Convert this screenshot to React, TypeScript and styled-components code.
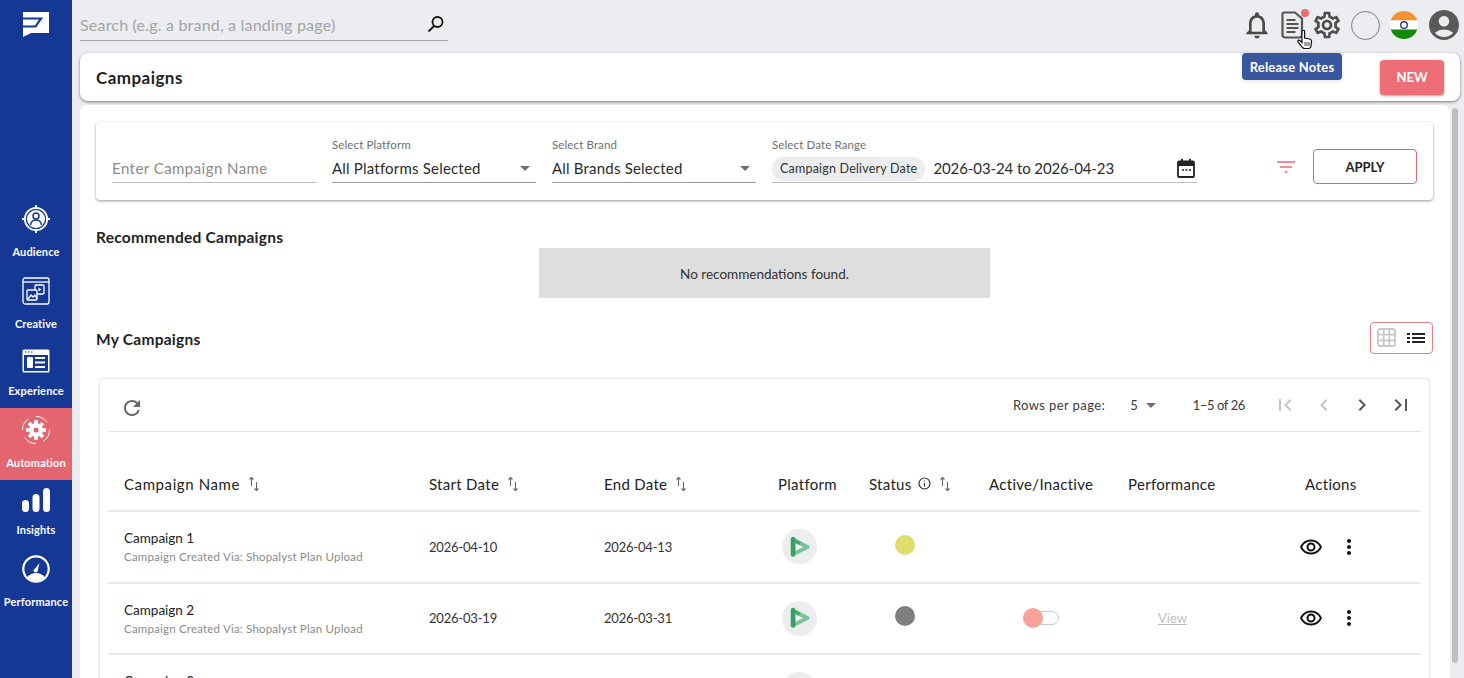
import React from 'react';
import styled, { createGlobalStyle } from 'styled-components';
import {
  MdOutlineNotifications, MdOutlineSettings, MdAccountCircle, MdRefresh,
  MdOutlineRemoveRedEye, MdMoreVert, MdFirstPage, MdLastPage, MdChevronLeft, MdChevronRight,
} from 'react-icons/md';

const Global = createGlobalStyle`
  html, body { margin: 0; padding: 0; height: 100%; overflow: hidden; }
  body { font-family: Lato, "Open Sans", sans-serif; background: #ebedf0; color: #1f1f1f; }
  #root { height: 100%; }
  * { box-sizing: border-box; }
`;

const Shell = styled.div`
  display: flex;
  height: 678px;
  overflow: hidden;
`;

const Sidebar = styled.aside`
  width: 72px;
  flex: none;
  background: #143893;
  padding-top: 12px;
  display: flex;
  flex-direction: column;
  align-items: center;
  position: relative;
  z-index: 2;
`;

const Nav = styled.nav`
  margin-top: 160px;
  width: 100%;
  display: flex;
  flex-direction: column;
`;

const NavItem = styled.div<{ $active?: boolean; $compact?: boolean }>`
  display: flex;
  flex-direction: column;
  align-items: center;
  gap: 6px;
  padding: ${p => (p.$compact ? '3px 0 10px' : '2px 0 10px')};
  background: ${p => (p.$active ? '#e2656f' : 'transparent')};
`;

const NavIcon = styled.div<{ $compact?: boolean }>`
  height: ${p => (p.$compact ? 34 : 40)}px;
  display: flex;
  align-items: center;
  justify-content: center;
`;

const NavLabel = styled.span`
  font-size: 11px;
  line-height: 14px;
  font-weight: 700;
  letter-spacing: 0.15px;
  color: #fff;
  white-space: nowrap;
`;

const Main = styled.main`
  flex: 1;
  min-width: 0;
  display: flex;
`;

const Content = styled.div`
  flex: 1;
  min-width: 0;
  padding-left: 8px;
  display: flex;
  flex-direction: column;
`;

const ScrollTrack = styled.div`
  width: 14px;
  flex: none;
  padding: 108px 6px 15px 2px;
  display: flex;
`;

const ScrollThumb = styled.div`
  width: 6px;
  height: 100%;
  border-radius: 3px;
  background: #bcbfc0;
`;

const TopBar = styled.header`
  height: 53px;
  flex: none;
  margin-right: -14px;
  display: flex;
  align-items: flex-start;
  justify-content: space-between;
  position: relative;
`;

const Search = styled.div`
  width: 368px;
  height: 41px;
  padding-top: 15px;
  border-bottom: 1px solid #a4a6a8;
  display: flex;
  justify-content: space-between;
  align-items: flex-start;
`;

const SearchText = styled.span`
  font-size: 16px;
  line-height: 20px;
  letter-spacing: 0.2px;
  color: #a3a5a8;
`;

const SearchIconWrap = styled.span`
  margin-right: 3px;
  line-height: 0;
`;

const TopIcons = styled.div`
  height: 53px;
  display: flex;
  align-items: center;
  padding-bottom: 3px;
  position: relative;
`;

const TopIcon = styled.span<{ $w: number }>`
  width: ${p => p.$w}px;
  display: flex;
  justify-content: center;
  position: relative;
  line-height: 0;
`;

const RedDot = styled.span`
  position: absolute;
  top: -2px;
  right: -1px;
  width: 8px;
  height: 8px;
  border-radius: 50%;
  background: #ec6a75;
`;

const EmptyCircle = styled.span`
  width: 29px;
  height: 29px;
  border-radius: 50%;
  border: 1px solid #7c7c7c;
  display: block;
`;

const Tooltip = styled.div`
  position: absolute;
  top: 53px;
  left: 4px;
  width: 100px;
  height: 27px;
  background: #39579e;
  color: #fff;
  font-size: 13px;
  font-weight: 700;
  letter-spacing: 0.2px;
  line-height: 28px;
  text-align: center;
  border-radius: 4px;
  z-index: 3;
  box-shadow: 0 2px 4px rgba(0,0,0,0.1);
`;

const Pointer = styled.svg`
  position: absolute;
  top: 30px;
  left: 59px;
  z-index: 4;
`;

const HeaderCard = styled.section`
  height: 48px;
  flex: none;
  background: #fff;
  border-radius: 8px;
  box-shadow: 0 1px 3px rgba(0,0,0,0.5);
  padding: 0 16px 0 16px;
  margin-right: -10px;
  display: flex;
  align-items: center;
  justify-content: space-between;
`;

const PageTitle = styled.h1`
  margin: 0;
  font-size: 17px;
  font-weight: 700;
  letter-spacing: 0.45px;
  color: #1f1f1f;
`;

const NewButton = styled.button`
  width: 64px;
  height: 35px;
  border: 0;
  border-radius: 4px;
  background: #ee6e78;
  color: #fff;
  font: 700 13px Lato, sans-serif;
  box-shadow: 0 1px 3px rgba(0,0,0,0.35);
`;

const BodyCard = styled.section`
  margin-top: 4px;
  flex: 1;
  min-height: 0;
  background: #fff;
  border-radius: 8px 8px 0 0;
  padding: 17px 17px 0 16px;
  overflow: hidden;
`;

const FilterCard = styled.div`
  height: 78px;
  border-radius: 4px;
  box-shadow: 0 1px 3px rgba(0,0,0,0.4);
  display: flex;
  align-items: flex-end;
  padding: 0 16px 17px 16px;
`;

const Field = styled.div<{ $w: number }>`
  width: ${p => p.$w}px;
  flex: none;
  margin-right: 16px;
  display: flex;
  flex-direction: column;
`;

const FieldLabel = styled.label`
  font-size: 11.5px;
  line-height: 14px;
  letter-spacing: 0.12px;
  color: #6f6f6f;
  margin-bottom: 4px;
`;

const FieldRow = styled.div<{ $light?: boolean }>`
  height: 27px;
  border-bottom: 1px solid ${p => (p.$light ? '#bdbdbd' : '#9a9a9a')};
  display: flex;
  align-items: center;
  justify-content: space-between;
  font-size: 15px;
  letter-spacing: 0.2px;
  color: #2b2b2b;
  padding-bottom: 2px;
`;

const Placeholder = styled.span`
  color: #8a8a8a;
  letter-spacing: 0.45px;
`;

const Caret = styled.span`
  width: 0;
  height: 0;
  border-left: 5px solid transparent;
  border-right: 5px solid transparent;
  border-top: 5px solid #707070;
  margin-right: 6px;
`;

const DateChip = styled.span`
  height: 24px;
  margin: 2px 8px 0 0;
  padding: 0 8px;
  border-radius: 12px;
  background: #ebedee;
  color: #333;
  font-size: 12.5px;
  letter-spacing: 0.2px;
  line-height: 24px;
  white-space: nowrap;
`;

const DateText = styled.span`
  flex: 1;
  white-space: nowrap;
  letter-spacing: -0.1px;
`;

const CalendarIcon = styled.svg`
  margin-right: 1px;
`;

const FilterTools = styled.div`
  margin-left: auto;
  display: flex;
  align-items: center;
  gap: 18px;
  margin-bottom: -1px;
`;

const ApplyButton = styled.button`
  width: 104px;
  height: 35px;
  background: #fff;
  border: 1px solid #cf6a72;
  border-radius: 4px;
  color: #222;
  font: 700 13px Lato, sans-serif;
`;

const SectionTitle = styled.h2`
  margin: 0;
  font-size: 15.5px;
  line-height: 20px;
  font-weight: 700;
  letter-spacing: 0.25px;
  color: #222;
`;

const Recommended = styled.div`
  margin-top: 27px;
`;

const EmptyBox = styled.div`
  width: 451px;
  height: 50px;
  margin: 1px auto 0;
  padding-top: 1px;
  background: #dedede;
  font-size: 13.5px;
  color: #333;
  display: flex;
  align-items: center;
  justify-content: center;
`;

const MyHeader = styled.div`
  margin-top: 23px;
  height: 33px;
  display: flex;
  align-items: center;
  justify-content: space-between;
`;

const MyTitle = styled(SectionTitle)`
  padding-top: 2px;
`;

const ViewToggle = styled.div`
  width: 63px;
  height: 32px;
  border: 1px solid #e77f87;
  border-radius: 4px;
  display: flex;
  align-items: center;
  justify-content: space-between;
  padding: 0 7px 0 6px;
`;

const TableCard = styled.div`
  margin: 25px 4px 0;
  border-radius: 4px 4px 0 0;
  box-shadow: 0 0 3px rgba(0,0,0,0.25);
  padding: 0 8px;
  height: 320px;
`;

const TableBar = styled.div`
  height: 53px;
  border-bottom: 1px solid #e2e2e2;
  display: flex;
  align-items: center;
  padding: 0 16px;
  font-size: 13px;
  color: #3a3a3a;
`;

const Refresh = styled.span`
  margin: 6px auto 0 -4px;
  line-height: 0;
`;

const RowsLabel = styled.span`
  margin-right: 25px;
  letter-spacing: 0.4px;
`;

const RowsValue = styled.span`
  display: flex;
  align-items: center;
  gap: 8px;
  margin-right: 31px;
`;

const RangeText = styled.span`
  margin-right: 28px;
  letter-spacing: -0.4px;
`;

const Pager = styled.span`
  display: flex;
  gap: 14.5px;
  line-height: 0;
  margin-right: -7.5px;
`;

const Grid = styled.div`
  display: grid;
  grid-template-columns: 305px 175px 174px 91px 120px 139px 177px 1fr;
  padding: 0 0 0 16px;
`;

const HeadRow = styled(Grid)`
  height: 80px;
  border-bottom: 2px solid #e9e9e9;
  align-items: center;
  font-size: 15px;
  letter-spacing: 0.3px;
  color: #222;
  padding-top: 25px;
`;

const HeadCell = styled.div<{ $wide?: boolean }>`
  display: flex;
  align-items: center;
  gap: 6px;
  white-space: nowrap;
  letter-spacing: ${p => (p.$wide ? '0.6px' : 'inherit')};
`;

const SortGlyph = styled.svg`
  margin-left: 2px;
  flex: none;
`;

const BodyRow = styled(Grid)`
  height: 71.5px;
  border-bottom: 2px solid #e9e9e9;
  align-items: center;
  font-size: 13px;
  color: #333;
`;

const NameCell = styled.div`
  display: flex;
  flex-direction: column;
  gap: 4px;
`;

const CampaignName = styled.span`
  font-size: 13.5px;
  color: #222;
`;

const CampaignSub = styled.span`
  font-size: 11.5px;
  letter-spacing: 0.2px;
  color: #8b8b8b;
`;

const DateCell = styled.div`
  letter-spacing: -0.2px;
`;

const PlatformBadge = styled.span`
  width: 35px;
  height: 35px;
  margin-left: 4px;
  border-radius: 50%;
  background: #ebedee;
  display: flex;
  align-items: center;
  justify-content: center;
`;

const StatusDot = styled.span<{ $color: string }>`
  display: block;
  width: 20px;
  height: 20px;
  margin: -4px 0 0 26px;
  border-radius: 50%;
  background: ${p => p.$color};
`;

const Toggle = styled.span`
  width: 36px;
  height: 14px;
  margin-left: 34px;
  border: 1px solid #c9c9c9;
  border-radius: 7px;
  position: relative;
  display: block;
`;

const ToggleKnob = styled.span`
  position: absolute;
  left: -1px;
  top: -4px;
  width: 20px;
  height: 20px;
  border-radius: 50%;
  background: #f8a29b;
`;

const ViewLink = styled.a`
  margin-left: 30px;
  color: #bdbdbd;
  text-decoration: underline;
  font-size: 13px;
`;

const Actions = styled.div`
  display: flex;
  align-items: center;
  gap: 14px;
  margin-left: -6.5px;
  color: #111;
  line-height: 0;
`;

const SortIcon = () => (
  <SortGlyph width="12" height="16" viewBox="0 0 12 16" fill="none" stroke="#666" strokeWidth="1.1">
    <path d="M3.5 10V1.500M1.500 3.500l2-2 2 2" />
    <path d="M8.500 6v8.500M6.500 12.500l2 2 2-2" />
  </SortGlyph>
);

const PlayLogo = () => (
  <svg width="22" height="22" viewBox="0 0 22 22">
    <path d="M4.500 4 L18.500 11 L4.500 18 Z" fill="#f2f5f2" stroke="#7cc294" strokeWidth="4" strokeLinejoin="round" />
    <path d="M4 3.500 L11 7.500" stroke="#4aaa6d" strokeWidth="3.500" />
    <path d="M4 3 V18.500" stroke="#38a060" strokeWidth="4.500" strokeLinecap="round" />
  </svg>
);

const rows = [
  { name: 'Campaign 1', start: '2026-04-10', end: '2026-04-13', color: '#dfdd6b', active: false },
  { name: 'Campaign 2', start: '2026-03-19', end: '2026-03-31', color: '#7f7f7f', active: true },
  { name: 'Campaign 3', start: '', end: '', color: '#7f7f7f', active: false },
];

export default function App() {
  return (
    <Shell>
      <Global />
      <Sidebar>
        <svg width="26" height="25" viewBox="0 0 26 25">
          <path d="M0 0h26v21H8l-8 4Z" fill="#fff" />
          <path d="M-1 6.500H18L12.500 14.500H-1" fill="none" stroke="#143893" strokeWidth="2.200" />
        </svg>
        <Nav>
          <NavItem>
            <NavIcon>
              <svg width="28" height="28" viewBox="0 0 28 28">
                <circle cx="14" cy="14" r="11.200" fill="none" stroke="#fff" strokeWidth="1.800" />
                <path d="M14 0v4M14 24v4M0 14h4M24 14h4" stroke="#fff" strokeWidth="1.800" />
                <circle cx="14" cy="14" r="9" fill="#fff" />
                <circle cx="14" cy="11" r="3" fill="none" stroke="#143893" strokeWidth="1.500" />
                <path d="M8.500 20c.5-3.500 2.500-5 5.500-5s5 1.500 5.500 5" fill="none" stroke="#143893" strokeWidth="1.500" />
              </svg>
            </NavIcon>
            <NavLabel>Audience</NavLabel>
          </NavItem>
          <NavItem>
            <NavIcon>
              <svg width="28" height="28" viewBox="0 0 28 28" fill="none" stroke="#fff" strokeWidth="1.300">
                <rect x="1" y="1" width="26" height="26" rx="2" />
                <path d="M1 5h26" />
                <rect x="13" y="8" width="9" height="9" rx="1" />
                <path d="M16.500 10.500v4l3-2Z" fill="#fff" stroke="none" />
                <rect x="5" y="13" width="10" height="10" rx="1" fill="#143893" />
                <path d="M6 22l3-4 2 2 2-2 2 4" />
              </svg>
            </NavIcon>
            <NavLabel>Creative</NavLabel>
          </NavItem>
          <NavItem $compact>
            <NavIcon $compact>
              <svg width="28" height="24" viewBox="0 0 28 24">
                <rect x="0.500" y="0.500" width="27" height="23" rx="1.500" fill="#fff" />
                <rect x="2" y="6" width="24" height="16" fill="#143893" />
                <rect x="5" y="8" width="6" height="11" rx="1" fill="#fff" />
                <path d="M13 9h10M13 13.500h10M13 18h10" stroke="#fff" strokeWidth="1.800" />
                <path d="M3 3h1.500M6 3h1.500M9 3h1.500" stroke="#143893" strokeWidth="1.200" />
              </svg>
            </NavIcon>
            <NavLabel>Experience</NavLabel>
          </NavItem>
          <NavItem $active>
            <NavIcon>
              <svg width="30" height="30" viewBox="0 0 30 30">
                <circle cx="15" cy="15" r="13.500" fill="none" stroke="#fff" strokeWidth="1" strokeDasharray="13 8" />
                <g stroke="#fff" strokeWidth="3.500">
                  <path d="M15 5v20M5 15h20M8 8l14 14M22 8 8 22" />
                </g>
                <circle cx="15" cy="15" r="7" fill="#fff" />
                <circle cx="15" cy="15" r="2.500" fill="#e2656f" />
              </svg>
            </NavIcon>
            <NavLabel>Automation</NavLabel>
          </NavItem>
          <NavItem $compact>
            <NavIcon $compact>
              <svg width="28" height="24" viewBox="0 0 28 24" fill="#fff">
                <rect x="0" y="12" width="7" height="12" rx="3.500" />
                <rect x="10.500" y="6" width="7" height="18" rx="3.500" />
                <rect x="21" y="0" width="7" height="24" rx="3.500" />
              </svg>
            </NavIcon>
            <NavLabel>Insights</NavLabel>
          </NavItem>
          <NavItem>
            <NavIcon>
              <svg width="28" height="28" viewBox="0 0 28 28">
                <circle cx="14" cy="14" r="12.700" fill="none" stroke="#fff" strokeWidth="2.200" />
                <path d="M5 22.500c2-3 5.500-4.500 9-4.500s7 1.500 9 4.500c-2.500 2.300-5.500 3.500-9 3.500s-6.500-1.200-9-3.500Z" fill="#fff" />
                <path d="M12 15l5.500-7 -2 8.500Z" fill="#fff" />
                <circle cx="13.500" cy="15.500" r="2" fill="#fff" />
              </svg>
            </NavIcon>
            <NavLabel>Performance</NavLabel>
          </NavItem>
        </Nav>
      </Sidebar>
      <Main>
        <Content>
          <TopBar>
            <Search>
              <SearchText>Search (e.g. a brand, a landing page)</SearchText>
              <SearchIconWrap>
                <svg width="18" height="18" viewBox="0 0 18 18" fill="none" stroke="#111" strokeWidth="1.800">
                  <circle cx="10.500" cy="7" r="5" />
                  <path d="M7 11 1.500 16.500" />
                </svg>
              </SearchIconWrap>
            </Search>
            <TopIcons>
              <TopIcon $w={38}><MdOutlineNotifications size={32} color="#4a4a4a" /></TopIcon>
              <TopIcon $w={32}>
                <svg width="23" height="28" viewBox="0 0 23 28" fill="none" stroke="#555" strokeWidth="2.200">
                  <path d="M3 1.500h11l7 6V24a2.500 2.500 0 0 1-2.500 2.500H4A2.500 2.500 0 0 1 1.500 24V3A1.500 1.500 0 0 1 3 1.500Z" />
                  <path d="M5.500 9h9M5.500 13h12M5.500 17h12M5.500 21h9" />
                </svg>
                <RedDot />
              </TopIcon>
              <TopIcon $w={38}><MdOutlineSettings size={32} color="#4d4d4d" /></TopIcon>
              <TopIcon $w={38}><EmptyCircle /></TopIcon>
              <TopIcon $w={40}>
                <svg width="28" height="28" viewBox="0 0 28 28">
                  <clipPath id="flagclip"><circle cx="14" cy="14" r="14" /></clipPath>
                  <g clipPath="url(#flagclip)">
                    <rect width="28" height="9.500" fill="#f59331" />
                    <rect y="9.500" width="28" height="9" fill="#fff" />
                    <rect y="18.500" width="28" height="9.500" fill="#128807" />
                  </g>
                  <circle cx="14" cy="14" r="3.300" fill="none" stroke="#2a3a8c" strokeWidth="1.400" />
                </svg>
              </TopIcon>
              <TopIcon $w={40}><MdAccountCircle size={36} color="#5a5a5a" /></TopIcon>
              <Tooltip>Release Notes</Tooltip>
              <Pointer width="16" height="20" viewBox="0 0 16 20">
                <path d="M5 1.500a1.300 1.300 0 0 1 2.600 0V8l5 1c1.500.4 2 1 2 2.500l-.6 4.500c-.2 1.500-1 2.500-2.500 2.500H7.500c-1 0-1.800-.5-2.400-1.400L1 12c-.7-1.500.9-2.600 2-1.500L5 12.500Z" fill="#fff" stroke="#111" strokeWidth="1.200" />
                <path d="M8 12v4M10 12v4M12 12v4" stroke="#111" strokeWidth="0.800" />
              </Pointer>
            </TopIcons>
          </TopBar>
          <HeaderCard>
            <PageTitle>Campaigns</PageTitle>
            <NewButton>NEW</NewButton>
          </HeaderCard>
          <BodyCard>
            <FilterCard>
              <Field $w={204}>
                <FieldRow $light><Placeholder>Enter Campaign Name</Placeholder></FieldRow>
              </Field>
              <Field $w={204}>
                <FieldLabel>Select Platform</FieldLabel>
                <FieldRow>All Platforms Selected<Caret /></FieldRow>
              </Field>
              <Field $w={204}>
                <FieldLabel>Select Brand</FieldLabel>
                <FieldRow>All Brands Selected<Caret /></FieldRow>
              </Field>
              <Field $w={425}>
                <FieldLabel>Select Date Range</FieldLabel>
                <FieldRow $light>
                  <DateChip>Campaign Delivery Date</DateChip>
                  <DateText>2026-03-24 to 2026-04-23</DateText>
                  <CalendarIcon width="20" height="20" viewBox="0 0 20 20" fill="none">
                    <path d="M3 3.500h14a1 1 0 0 1 1 1V18a1 1 0 0 1-1 1H3a1 1 0 0 1-1-1V4.500a1 1 0 0 1 1-1Z" stroke="#222" strokeWidth="1.800" />
                    <path d="M2 4h16v4H2Z" fill="#222" />
                    <path d="M6 1v3M14 1v3" stroke="#222" strokeWidth="2" />
                    <path d="M6 12h2M9.500 12h2M13 12h2" stroke="#222" strokeWidth="1.500" />
                  </CalendarIcon>
                </FieldRow>
              </Field>
              <FilterTools>
                <svg width="18" height="12" viewBox="0 0 18 12" stroke="#ec6a75" strokeWidth="1.400">
                  <path d="M0 1h18M3 6h12M7.500 11h3" />
                </svg>
                <ApplyButton>APPLY</ApplyButton>
              </FilterTools>
            </FilterCard>
            <Recommended>
              <SectionTitle>Recommended Campaigns</SectionTitle>
              <EmptyBox>No recommendations found.</EmptyBox>
            </Recommended>
            <MyHeader>
              <MyTitle>My Campaigns</MyTitle>
              <ViewToggle>
                <svg width="19" height="19" viewBox="0 0 19 19" fill="none" stroke="#c8c8c8" strokeWidth="1.800">
                  <rect x="1" y="1" width="17" height="17" rx="2" />
                  <path d="M6.700 1v17M12.300 1v17M1 6.700h17M1 12.300h17" />
                </svg>
                <svg width="18" height="12" viewBox="0 0 18 12" stroke="#222" strokeWidth="2">
                  <path d="M5 2h13M5 6h13M5 10h13M0 2h3M0 6h3M0 10h3" />
                </svg>
              </ViewToggle>
            </MyHeader>
            <TableCard>
              <TableBar>
                <Refresh><MdRefresh size={24} color="#666" /></Refresh>
                <RowsLabel>Rows per page:</RowsLabel>
                <RowsValue>5<Caret /></RowsValue>
                <RangeText>1–5 of 26</RangeText>
                <Pager>
                  <MdFirstPage size={24} color="#c4c4c4" />
                  <MdChevronLeft size={24} color="#c4c4c4" />
                  <MdChevronRight size={24} color="#555" />
                  <MdLastPage size={24} color="#555" />
                </Pager>
              </TableBar>
              <HeadRow>
                <HeadCell $wide>Campaign Name <SortIcon /></HeadCell>
                <HeadCell>Start Date <SortIcon /></HeadCell>
                <HeadCell>End Date <SortIcon /></HeadCell>
                <HeadCell>Platform</HeadCell>
                <HeadCell>
                  Status
                  <svg width="13" height="13" viewBox="0 0 13 13" fill="none" stroke="#333" strokeWidth="1.200">
                    <circle cx="6.500" cy="6.500" r="5.500" /><path d="M6.500 6v3.500M6.500 3.500v1" />
                  </svg>
                  <SortIcon />
                </HeadCell>
                <HeadCell>Active/Inactive</HeadCell>
                <HeadCell>Performance</HeadCell>
                <HeadCell>Actions</HeadCell>
              </HeadRow>
              {rows.map(r => (
                <BodyRow key={r.name}>
                  <NameCell>
                    <CampaignName>{r.name}</CampaignName>
                    <CampaignSub>Campaign Created Via: Shopalyst Plan Upload</CampaignSub>
                  </NameCell>
                  <DateCell>{r.start}</DateCell>
                  <DateCell>{r.end}</DateCell>
                  <div><PlatformBadge><PlayLogo /></PlatformBadge></div>
                  <div><StatusDot $color={r.color} /></div>
                  <div>{r.active && <Toggle><ToggleKnob /></Toggle>}</div>
                  <div>{r.active && <ViewLink>View</ViewLink>}</div>
                  <Actions><MdOutlineRemoveRedEye size={24} /><MdMoreVert size={24} /></Actions>
                </BodyRow>
              ))}
            </TableCard>
          </BodyCard>
        </Content>
        <ScrollTrack><ScrollThumb /></ScrollTrack>
      </Main>
    </Shell>
  );
}
